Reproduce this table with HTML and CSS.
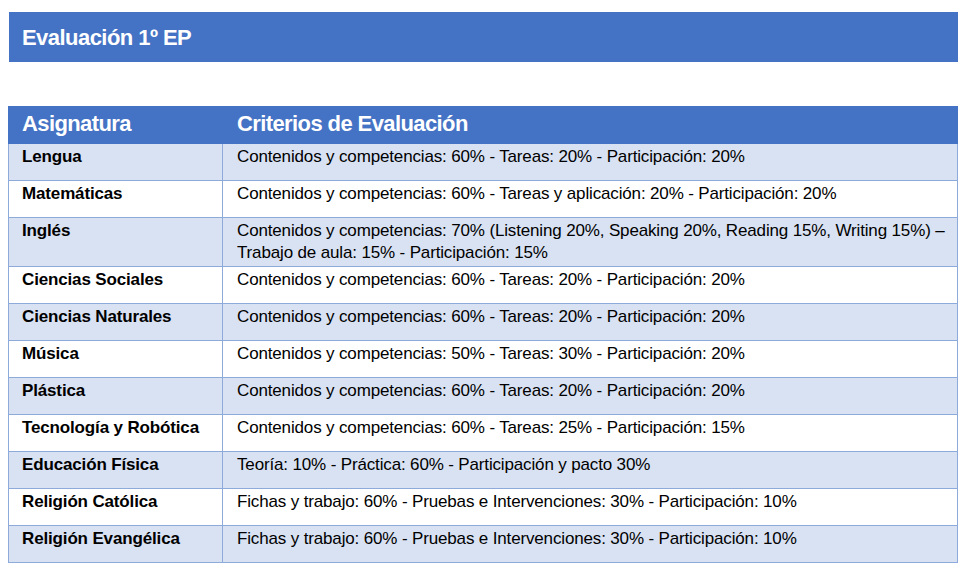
FILE: index.html
```html
<!DOCTYPE html>
<html lang="es">
<head>
<meta charset="utf-8">
<title>Evaluación 1º EP</title>
<link rel="stylesheet" href="styles.css">
</head>
<body>
<div class="page">
  <div class="title-bar"><h1 class="title">Evaluación 1º EP</h1></div>
  <table class="grid">
    <thead>
      <tr><th class="col-subj">Asignatura</th><th class="col-crit">Criterios de Evaluación</th></tr>
    </thead>
    <tbody>
      <tr class="alt"><td class="subj">Lengua</td><td>Contenidos y competencias: 60% - Tareas: 20% - Participación: 20%</td></tr>
      <tr><td class="subj">Matemáticas</td><td>Contenidos y competencias: 60% - Tareas y aplicación: 20% - Participación: 20%</td></tr>
      <tr class="alt"><td class="subj">Inglés</td><td>Contenidos y competencias: 70% (Listening 20%, Speaking 20%, Reading 15%, Writing 15%) – Trabajo de aula: 15% - Participación: 15%</td></tr>
      <tr><td class="subj">Ciencias Sociales</td><td>Contenidos y competencias: 60% - Tareas: 20% - Participación: 20%</td></tr>
      <tr class="alt"><td class="subj">Ciencias Naturales</td><td>Contenidos y competencias: 60% - Tareas: 20% - Participación: 20%</td></tr>
      <tr><td class="subj">Música</td><td>Contenidos y competencias: 50% - Tareas: 30% - Participación: 20%</td></tr>
      <tr class="alt"><td class="subj">Plástica</td><td>Contenidos y competencias: 60% - Tareas: 20% - Participación: 20%</td></tr>
      <tr><td class="subj">Tecnología y Robótica</td><td>Contenidos y competencias: 60% - Tareas: 25% - Participación: 15%</td></tr>
      <tr class="alt"><td class="subj">Educación Física</td><td>Teoría: 10% - Práctica: 60% - Participación y pacto 30%</td></tr>
      <tr><td class="subj">Religión Católica</td><td>Fichas y trabajo: 60% - Pruebas e Intervenciones: 30% - Participación: 10%</td></tr>
      <tr class="alt"><td class="subj">Religión Evangélica</td><td>Fichas y trabajo: 60% - Pruebas e Intervenciones: 30% - Participación: 10%</td></tr>
    </tbody>
  </table>
</div>
</body>
</html>
```

FILE: styles.css
```css
html, body {
  margin: 0;
  padding: 0;
  background: #ffffff;
}

body {
  font-family: "Liberation Sans", Arial, sans-serif;
  color: #000000;
}

.page {
  padding: 12px 11px 0 8px;
}

.title-bar {
  margin-left: 1px;
  height: 50px;
  background: #4472c4;
  display: flex;
  align-items: center;
  padding-left: 13px;
  padding-top: 2px;
  box-sizing: border-box;
}

.title {
  margin: 0;
  font-size: 22px;
  letter-spacing: -0.55px;
  font-weight: bold;
  color: #ffffff;
  line-height: 1;
}

.grid {
  margin-top: 44px;
  width: 950px;
  border-collapse: collapse;
  table-layout: fixed;
  border: 1px solid #8eaadb;
}

.grid th {
  background: #4472c4;
  color: #ffffff;
  font-size: 22px;
  letter-spacing: -0.6px;
  font-weight: bold;
  text-align: left;
  height: 37px;
  padding: 0 0 3px 13px;
  box-sizing: border-box;
  vertical-align: middle;
  border: 1px solid #4472c4;
}

.grid th.col-crit {
  padding-left: 14px;
}

.grid th.col-subj {
  width: 214px;
}

.grid td {
  font-size: 17px;
  letter-spacing: -0.15px;
  line-height: 22px;
  height: 37px;
  box-sizing: border-box;
  vertical-align: top;
  padding: 2px 10px 2px 14px;
  border: 1px solid #8eaadb;
}

.grid td.subj {
  font-weight: bold;
  padding-left: 13px;
}

.grid tr.alt td {
  background: #d9e2f3;
}
```
